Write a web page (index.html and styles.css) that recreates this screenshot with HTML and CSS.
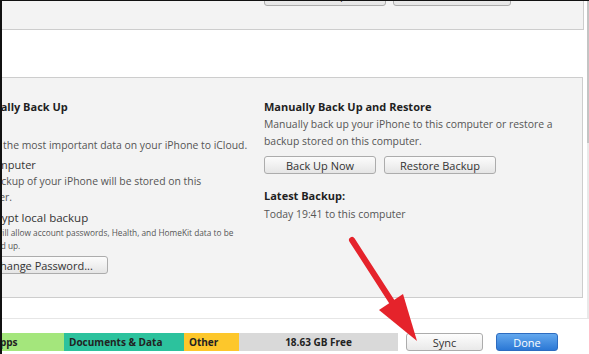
FILE: index.html
```html
<!DOCTYPE html>
<html>
  <head>
    <meta charset="utf-8">
    <title>iPhone &mdash; Backups</title>
    <link rel="stylesheet" href="styles.css">
  </head>
  <body>
    <div class="window">
      <div class="content">
        <div class="pane">
          <section class="panel panel-top">
            <div class="top-buttons">
              <a class="button button-update">Check for Update</a>
              <a class="button button-restore-phone">Restore iPhone...</a>
            </div>
          </section>

          <section class="panel panel-backups">
            <div class="col col-left">
              <h2 class="heading heading-auto">Automatically Back Up</h2>
              <div class="option">iCloud</div>
              <p class="option-desc option-desc-cloud">Back up the most important data on your iPhone to iCloud.</p>
              <div class="option option-computer">This computer</div>
              <p class="option-desc">A full backup of your iPhone will be stored on this<br>computer.</p>
              <div class="check">Encrypt local backup</div>
              <p class="check-desc">This will allow account passwords, Health, and HomeKit data to be<br>backed up.</p>
              <a class="button button-disabled">Change Password...</a>
            </div>
            <div class="col col-right">
              <h2 class="heading">Manually Back Up and Restore</h2>
              <p class="desc">Manually back up your iPhone to this computer or restore a<br>backup stored on this computer.</p>
              <div class="button-row">
                <a class="button button-wide">Back Up Now</a>
                <a class="button button-wide">Restore Backup</a>
              </div>
              <h2 class="heading heading-latest">Latest Backup:</h2>
              <p class="desc desc-latest">Today 19:41 to this computer</p>
            </div>
          </section>
        </div>
        <div class="scrollbar"><div class="thumb"></div></div>
      </div>

      <footer class="footer">
        <div class="capacity">
          <span class="seg seg-apps">Apps</span>
          <span class="seg seg-docs">Documents &amp; Data</span>
          <span class="seg seg-other">Other</span>
          <span class="seg seg-free">18.63 GB Free</span>
        </div>
        <a class="button button-sync">Sync</a>
        <a class="button button-done">Done</a>
      </footer>
    </div>

    <svg class="arrow" width="589" height="354" viewBox="0 0 589 354">
      <line x1="352" y1="240" x2="392" y2="302" stroke="#e5232b" stroke-width="6" stroke-linecap="round"/>
      <polygon points="379,310 403,294 417,341" fill="#e5232b"/>
    </svg>
  </body>
</html>
```

FILE: styles.css
```css
html, body {
  margin: 0;
  padding: 0;
}

*, *:before, *:after {
  box-sizing: border-box;
}

body {
  position: relative;
  width: 589px;
  height: 354px;
  overflow: hidden;
  background-color: #fff;
  font-family: "Open Sans", sans-serif;
  font-size: 10.4px;
  line-height: 17px;
  color: #555;
}

p, h2 {
  margin: 0;
}

.window {
  height: 354px;
  border-top: 1px solid #111;
  border-left: 2px solid #111;
  overflow: hidden;
}

.content {
  display: flex;
  height: 318px;
  border-bottom: 1px solid #e6e6e6;
}

.pane {
  flex: 1;
  min-width: 0;
}

.scrollbar {
  width: 2px;
  background-color: #e9e9e9;
}

.scrollbar .thumb {
  height: 142px;
  background-color: #c4c4c4;
}

.panel {
  background-color: #f3f3f3;
  border: 1px solid #cdcdcd;
}

.panel-top {
  display: flex;
  align-items: flex-start;
  height: 29px;
  margin: 0 3px 0 -10px;
  border-top: none;
}

.top-buttons {
  display: flex;
  gap: 7px;
  margin: -19px 0 0 271px;
}

.top-buttons .button {
  height: 24px;
}

.button-update {
  width: 122px;
}

.button-restore-phone {
  width: 118px;
}

.panel-backups {
  display: flex;
  height: 221px;
  margin: 47px 4px 0 -80px;
  padding-top: 20px;
  white-space: nowrap;
}

.col-left {
  width: 341px;
  flex-shrink: 0;
}

.col-right {
  flex: 1;
}

.heading {
  font-size: 11px;
  font-weight: bold;
  color: #1f1f1f;
}

.heading-auto {
  margin-left: 20px;
}

.option {
  margin-left: 39px;
  font-size: 11px;
  color: #333;
}

.option-computer {
  margin-top: 3px;
}

.option-desc {
  margin-left: 39px;
  line-height: 16px;
}

.option-desc-cloud {
  margin-top: 5px;
}

.check {
  margin: 4px 0 0 55px;
  font-size: 11.5px;
  color: #333;
}

.check-desc {
  margin: 0 0 0 55px;
  font-size: 8.3px;
  line-height: 13px;
}

.button-disabled {
  margin: 4px 0 0 55px;
  width: 130px;
  height: 20px;
  color: #999;
  border-color: #cfcfcf;
  background: #f6f6f6;
}

.desc {
  margin-top: 1px;
}

.desc-latest {
  margin-top: 2px;
}

.button-row {
  display: flex;
  gap: 8px;
  margin-top: 6px;
}

.button-wide {
  width: 112px;
}

.heading-latest {
  margin-top: 13px;
}

.button {
  display: inline-flex;
  flex-shrink: 0;
  align-items: center;
  justify-content: center;
  height: 18px;
  border: 1px solid #acacac;
  border-radius: 3px;
  background: linear-gradient(to bottom, #fcfcfc, #e5e5e5);
  color: #333;
  font-size: 11px;
  text-decoration: none;
}

.footer {
  display: flex;
  align-items: flex-start;
  padding-top: 14px;
}

.capacity {
  display: flex;
  margin-left: -14px;
  height: 18px;
}

.seg {
  padding-left: 5px;
  font-size: 10px;
  font-weight: bold;
  line-height: 18px;
  color: #222;
}

.seg-apps {
  width: 76px;
  padding-left: 5px;
  background-color: #a4e67c;
}

.seg-docs {
  width: 120px;
  background-color: #2cc29d;
}

.seg-other {
  width: 55px;
  background-color: #fdc72b;
}

.seg-free {
  width: 159px;
  padding-left: 0;
  text-align: center;
  background-color: #d9d9d9;
}

.button-sync {
  width: 77px;
  margin-left: 8px;
  background: linear-gradient(to bottom, #fdfdfd, #e9e9e9);
}

.button-done {
  width: 62px;
  margin-left: 13px;
  border-color: #2d6cc0;
  background: linear-gradient(to bottom, #63a8ee, #2b78d5);
  color: #fff;
}

.arrow {
  position: absolute;
  top: 0;
  left: 0;
}
```
